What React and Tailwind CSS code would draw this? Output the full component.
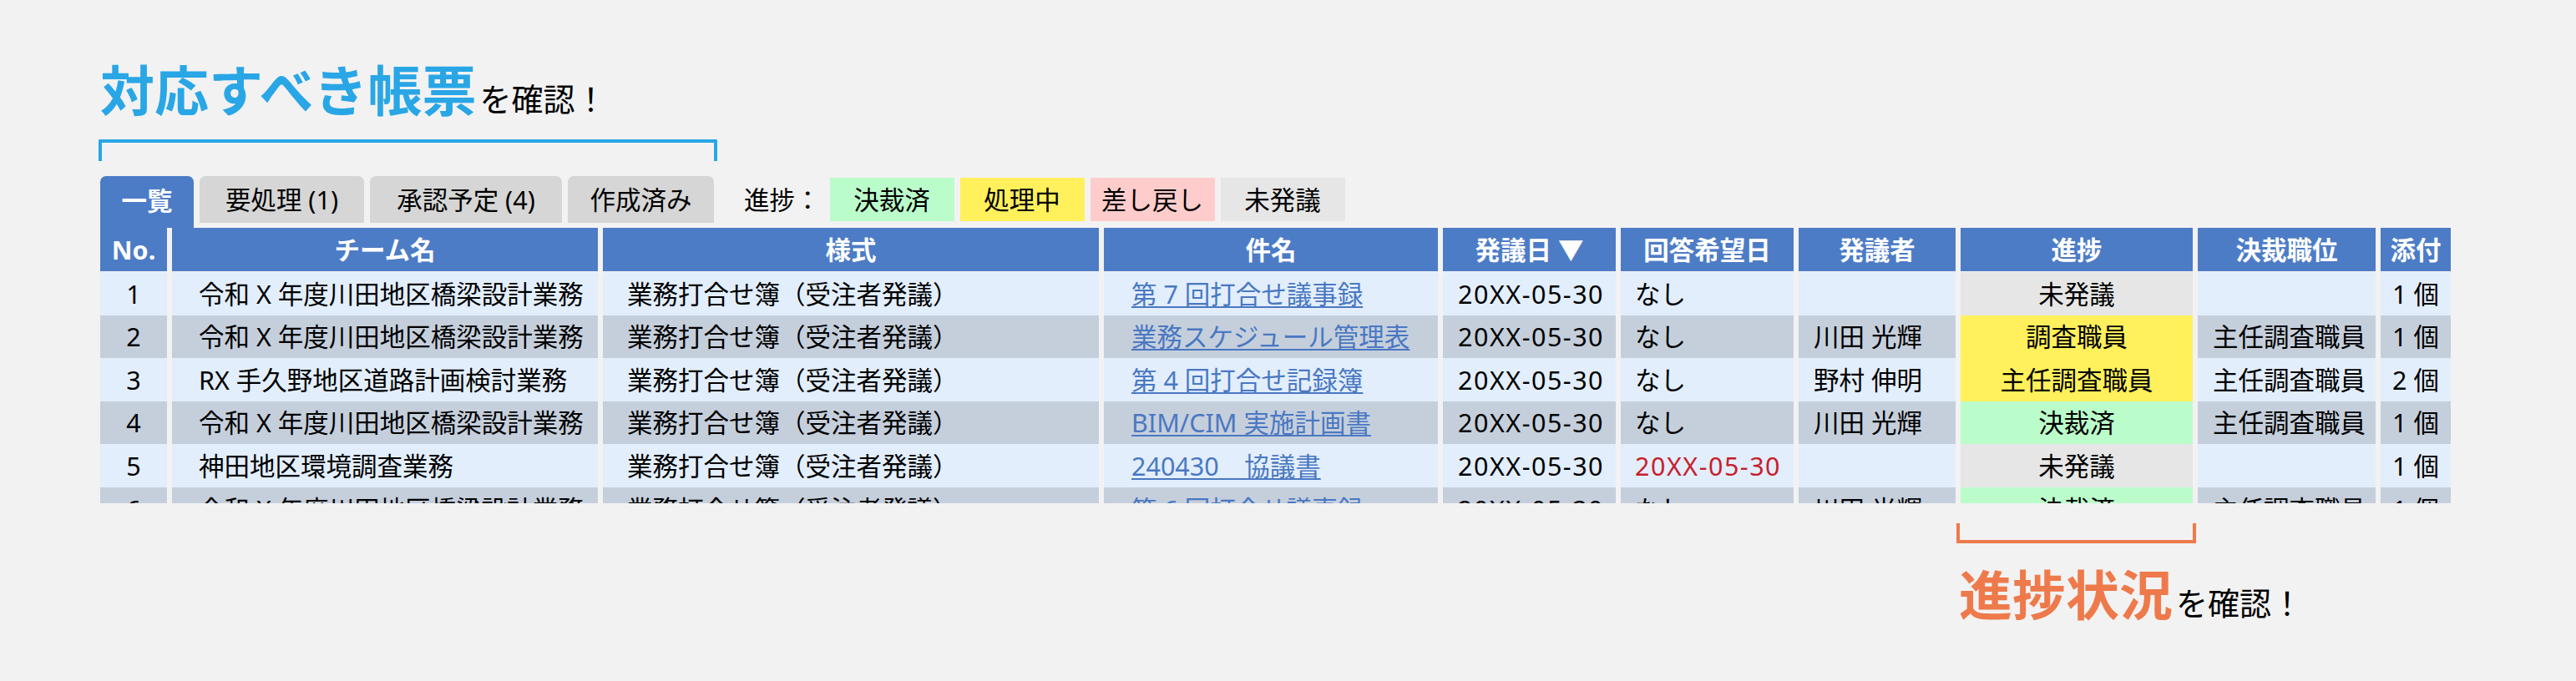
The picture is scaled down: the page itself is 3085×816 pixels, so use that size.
const COLS = "grid grid-cols-[80px_510px_594px_400px_207px_207px_188px_278px_213px_84px] gap-x-[6px]";

const HEAD = ["No.", "チーム名", "様式", "件名", "発議日 ▼", "回答希望日", "発議者", "進捗", "決裁職位", "添付"];

const ROWS = [
  { no: 1, team: "令和 X 年度川田地区橋梁設計業務", title: "第 7 回打合せ議事録", due: "なし", by: "", status: "未発議", pos: "", att: "1 個" },
  { no: 2, team: "令和 X 年度川田地区橋梁設計業務", title: "業務スケジュール管理表", due: "なし", by: "川田 光輝", status: "調査職員", pos: "主任調査職員", att: "1 個" },
  { no: 3, team: "RX 手久野地区道路計画検討業務", title: "第 4 回打合せ記録簿", due: "なし", by: "野村 伸明", status: "主任調査職員", pos: "主任調査職員", att: "2 個" },
  { no: 4, team: "令和 X 年度川田地区橋梁設計業務", title: "BIM/CIM 実施計画書", due: "なし", by: "川田 光輝", status: "決裁済", pos: "主任調査職員", att: "1 個" },
  { no: 5, team: "神田地区環境調査業務", title: "240430＿協議書", due: "20XX-05-30", late: true, by: "", status: "未発議", pos: "", att: "1 個" },
  { no: 6, team: "令和 X 年度川田地区橋梁設計業務", title: "第 6 回打合せ議事録", due: "なし", by: "川田 光輝", status: "決裁済", pos: "主任調査職員", att: "1 個" },
];

const STATUS_BG = {
  未発議: "bg-[#e6e6e6]",
  調査職員: "bg-[#fff05c]",
  主任調査職員: "bg-[#fff05c]",
  決裁済: "bg-[#bbfccb]",
};

const LEGEND = [
  { label: "決裁済", bg: "bg-[#bbfccb]" },
  { label: "処理中", bg: "bg-[#fff05c]" },
  { label: "差し戻し", bg: "bg-[#ffcccc]" },
  { label: "未発議", bg: "bg-[#e6e6e6]" },
];

const TABS = [
  { label: "要処理 (1)", w: "w-[197px]" },
  { label: "承認予定 (4)", w: "w-[230px]" },
  { label: "作成済み", w: "w-[175px]" },
];

function Row({ r }) {
  const bg = r.no % 2 ? "bg-[#e2eefc]" : "bg-[#c5cfdc]";
  const cell = `${bg} flex items-center h-[51.6px]`;
  return (
    <div className={COLS}>
      <div className={`${cell} justify-center`}>{r.no}</div>
      <div className={`${cell} pl-[32px]`}>{r.team}</div>
      <div className={`${cell} pl-[29px]`}>業務打合せ簿（受注者発議）</div>
      <div className={`${cell} pl-[33px]`}>
        <a className="text-[#4a78c2] underline underline-offset-[3px] decoration-[1.5px]">{r.title}</a>
      </div>
      <div className={`${cell} pl-[18px] tracking-[1.5px]`}>20XX-05-30</div>
      <div className={`${cell} pl-[17px] ${r.late ? "text-[#c8202c] tracking-[1.5px]" : ""}`}>{r.due}</div>
      <div className={`${cell} pl-[18px]`}>{r.by}</div>
      <div className={`${STATUS_BG[r.status]} flex items-center justify-center h-[51.6px]`}>{r.status}</div>
      <div className={`${cell} pl-[18px]`}>{r.pos}</div>
      <div className={`${cell} justify-center`}>{r.att}</div>
    </div>
  );
}

export default function App() {
  return (
    <div
      className="w-[3085px] h-[816px] bg-[#f2f2f2] pl-[120px] pt-[76px] text-black overflow-hidden"
      style={{ fontFamily: '"Noto Sans", "Noto Sans CJK JP", sans-serif' }}
    >
      {/* 見出し */}
      <div className="flex items-baseline leading-none">
        <span className="text-[65px] font-bold text-[#29a6e6]">対応すべき帳票</span>
        <span className="text-[38px] ml-[4px]">を確認！</span>
      </div>
      <div className="-ml-[2px] mt-[26px] w-[741px] h-[26px] border-t-4 border-x-4 border-[#29a6e6] rounded-t-[2px]" />

      {/* タブ + 凡例 */}
      <div className="mt-[18px] flex items-start text-[30.5px] leading-none">
        <div className="w-[112px] h-[62px] rounded-t-[7px] bg-[#4d7cc6] text-white font-bold flex items-center justify-center pb-[4px]">一覧</div>
        {TABS.map((t) => (
          <div key={t.label} className={`${t.w} ml-[7px] h-[56px] rounded-t-[7px] bg-[#d6d6d6] flex items-center justify-center`}>{t.label}</div>
        ))}
        <div className="ml-[36px] h-[56px] flex items-center gap-[7px]">
          <span className="mr-[4px]">進捗：</span>
          {LEGEND.map((l) => (
            <span key={l.label} className={`${l.bg} w-[149px] h-[52px] flex items-center justify-center`}>{l.label}</span>
          ))}
        </div>
      </div>

      {/* 一覧テーブル */}
      <div className="w-[2815px] h-[330px] overflow-hidden text-[30.5px] leading-none">
        <div className={COLS}>
          {HEAD.map((h) => (
            <div key={h} className="bg-[#4d7cc6] h-[52px] flex items-center justify-center text-white font-bold">{h}</div>
          ))}
        </div>
        <div className="h-px" />
        {ROWS.map((r) => (
          <Row key={r.no} r={r} />
        ))}
      </div>

      {/* 進捗状況 */}
      <div className="ml-[2223px] mt-[24px] w-[287px] h-[24px] border-b-4 border-x-4 border-[#ee7a4c]" />
      <div className="ml-[2226px] mt-[30px] flex items-baseline leading-none">
        <span className="text-[64px] font-bold text-[#ee7a4c]">進捗状況</span>
        <span className="text-[38px] ml-[4px]">を確認！</span>
      </div>
    </div>
  );
}
